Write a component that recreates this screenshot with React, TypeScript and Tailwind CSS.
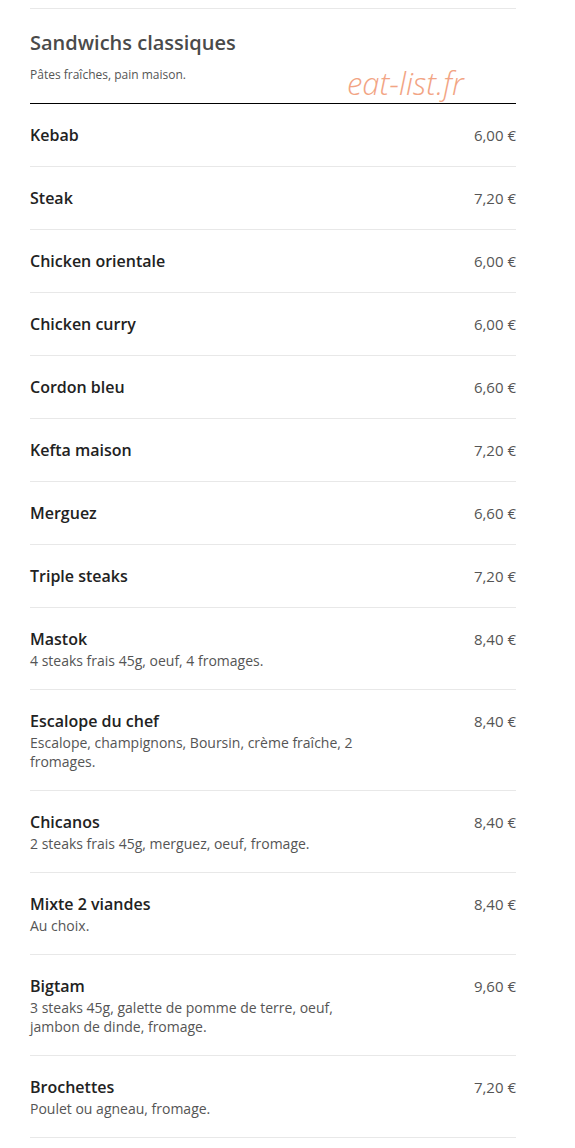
const items = [
  { name: 'Kebab', price: '6,00 €' },
  { name: 'Steak', price: '7,20 €' },
  { name: 'Chicken orientale', price: '6,00 €' },
  { name: 'Chicken curry', price: '6,00 €' },
  { name: 'Cordon bleu', price: '6,60 €' },
  { name: 'Kefta maison', price: '7,20 €' },
  { name: 'Merguez', price: '6,60 €' },
  { name: 'Triple steaks', price: '7,20 €' },
  { name: 'Mastok', price: '8,40 €', desc: '4 steaks frais 45g, oeuf, 4 fromages.' },
  {
    name: 'Escalope du chef',
    price: '8,40 €',
    desc: 'Escalope, champignons, Boursin, crème fraîche, 2 fromages.',
  },
  { name: 'Chicanos', price: '8,40 €', desc: '2 steaks frais 45g, merguez, oeuf, fromage.' },
  { name: 'Mixte 2 viandes', price: '8,40 €', desc: 'Au choix.' },
  {
    name: 'Bigtam',
    price: '9,60 €',
    desc: '3 steaks 45g, galette de pomme de terre, oeuf, jambon de dinde, fromage.',
  },
  { name: 'Brochettes', price: '7,20 €', desc: 'Poulet ou agneau, fromage.' },
]

const App = () => {
  return (
    <div className="min-h-[1148px] bg-white font-['Open_Sans',sans-serif]">
      <div className="ml-[30px] w-[486px] pt-[8px]">
        <div className="border-t border-[#e8e8e8]" />
        <div className="relative pt-[19px]">
          <h2 className="text-[20px] leading-[30px] font-semibold text-[#4a4a4a]">
            Sandwichs classiques
          </h2>
          <p className="mt-[9px] text-[12px] leading-[16px] text-[#555]">
            Pâtes fraîches, pain maison.
          </p>
          <div className="absolute left-[317px] top-[54px] text-[31px] leading-[40px] italic font-light text-[#f2a484]">
            eat-list.fr
          </div>
          <div className="mt-[20px] border-t-[1.5px] border-black" />
        </div>
        <ul>
          {items.map((item) => (
            <li
              key={item.name}
              className="flex justify-between border-b border-[#e8e8e8] py-[19px]"
            >
              <div>
                <div className="text-[16px] leading-[24px] font-semibold text-[#222]">
                  {item.name}
                </div>
                {item.desc && (
                  <div className="w-[338px] text-[14px] leading-[19px] text-[#555]">
                    {item.desc}
                  </div>
                )}
              </div>
              <div className="text-[15px] leading-[24px] text-[#555]">{item.price}</div>
            </li>
          ))}
        </ul>
      </div>
    </div>
  )
}

export default App
